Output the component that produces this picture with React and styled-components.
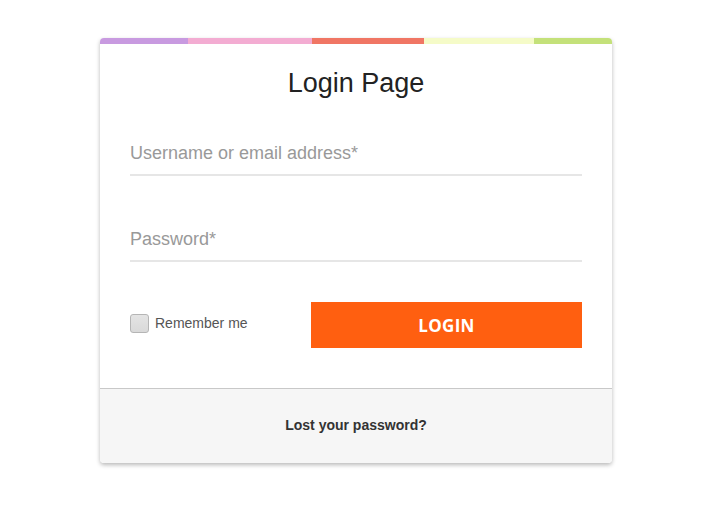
import React from "react";
import styled, { createGlobalStyle } from "styled-components";

const GlobalStyle = createGlobalStyle`
  body {
    margin: 0;
    background: #fff;
    font-family: "Liberation Sans", Arial, sans-serif;
  }
`;

const Page = styled.div`
  padding: 38px 0 40px 100px;
`;

const Card = styled.div`
  width: 512px;
  background: #fff;
  border-radius: 4px;
  overflow: hidden;
  box-shadow: 0 2px 4px rgba(0, 0, 0, 0.28);
`;

const ColorBar = styled.div`
  display: flex;
  height: 6px;
`;

const BarPiece = styled.div`
  width: ${(props) => props.w}px;
  background: ${(props) => props.color};
`;

const Body = styled.div`
  padding: 24px 30px 40px;
`;

const Title = styled.h1`
  margin: 0 0 36px;
  font-size: 27px;
  line-height: 30px;
  font-weight: normal;
  color: #222;
  text-align: center;
`;

const Field = styled.input`
  display: block;
  width: 100%;
  box-sizing: border-box;
  height: 42px;
  margin: 0 0 ${(props) => props.gap}px;
  padding: 0 0 2px;
  border: none;
  border-bottom: 2px solid #e6e6e6;
  outline: none;
  font-family: "Liberation Sans", Arial, sans-serif;
  font-size: 18px;
  color: #333;
  background: transparent;

  &::placeholder {
    color: #999;
  }
`;

const Row = styled.div`
  display: flex;
  align-items: center;
  justify-content: space-between;
`;

const Remember = styled.label`
  display: flex;
  align-items: center;
  gap: 6px;
  margin-top: -4px;
  font-size: 14px;
  color: #555;
`;

const Check = styled.span`
  width: 17px;
  height: 17px;
  border: 1px solid #b5b5b5;
  border-radius: 3px;
  background: linear-gradient(#e4e4e4, #d9d9d9);
`;

const LoginButton = styled.button`
  width: 271px;
  height: 46px;
  border: none;
  background: #ff5f10;
  color: #fff;
  font-family: "Open Sans", sans-serif;
  font-weight: bold;
  font-size: 17px;
  letter-spacing: 0.3px;
  cursor: pointer;
`;

const Footer = styled.div`
  border-top: 1px solid #c8c8c8;
  background: #f6f6f6;
  box-sizing: border-box;
  height: 75px;
  padding-bottom: 2px;
  display: flex;
  align-items: center;
  justify-content: center;
  font-size: 14px;
  font-weight: bold;
  color: #333;
`;

const bars = [
  { w: 88, color: "#c89ae0" },
  { w: 124, color: "#f3acd2" },
  { w: 112, color: "#f07664" },
  { w: 110, color: "#f5fbc8" },
  { w: 78, color: "#c4e17a" },
];

export default function App() {
  return (
    <Page>
      <GlobalStyle />
      <Card>
        <ColorBar>
          {bars.map((b, i) => (
            <BarPiece key={i} w={b.w} color={b.color} />
          ))}
        </ColorBar>
        <Body>
          <Title>Login Page</Title>
          <Field gap={44} type="text" placeholder="Username or email address*" />
          <Field gap={40} type="password" placeholder="Password*" />
          <Row>
            <Remember>
              <Check />
              Remember me
            </Remember>
            <LoginButton>LOGIN</LoginButton>
          </Row>
        </Body>
        <Footer>Lost your password?</Footer>
      </Card>
    </Page>
  );
}
